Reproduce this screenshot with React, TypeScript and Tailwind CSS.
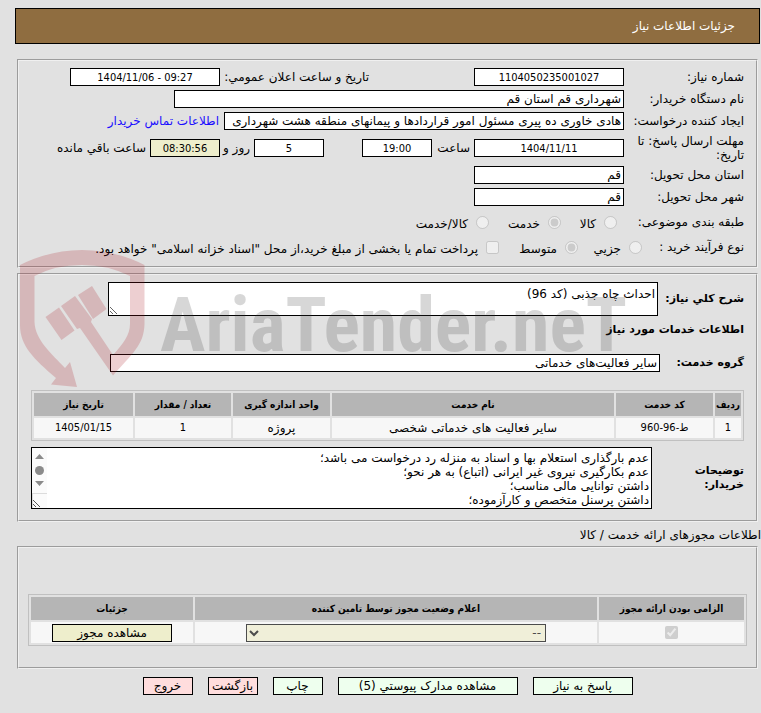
import type { ComponentProps, ReactNode } from "react";

const services = [
  {
    code: "ط-96-960",
    name: "سایر فعالیت های خدماتی شخصی",
    unit: "پروژه",
    amount: "1",
    date: "1405/01/15",
  },
];

const notes = [
  "عدم بارگذاری استعلام بها و اسناد به منزله رد درخواست می باشد؛",
  "عدم بکارگیری نیروی غیر ایرانی (اتباع) به هر نحو؛",
  "داشتن توانایی مالی مناسب؛",
  "داشتن پرسنل متخصص و کارآزموده؛",
].join("\n");

const actions = [
  { label: "پاسخ به نیاز", style: "w-[100px] bg-[#eeffee]" },
  { label: "مشاهده مدارک پیوستي (5)", style: "w-[180px] bg-[#eeffee]" },
  { label: "چاپ", style: "w-[50px] bg-[#eeffee]" },
  { label: "بازگشت", style: "w-[50px] bg-[#ffdddd]" },
  { label: "خروج", style: "w-[50px] bg-[#ffdddd]" },
];

const Panel = ({ className = "", children }: { className?: string; children: ReactNode }) => (
  <fieldset className={`mx-0.5 min-w-0 border-2 border-[#f0f0f0] [border-style:groove] ${className}`}>
    {children}
  </fieldset>
);

const Field = ({ className = "", ...props }: ComponentProps<"input">) => (
  <input
    readOnly
    className={`h-[18px] min-w-0 border border-black px-0.5 outline-none ${className}`}
    {...props}
  />
);

// numbers, dates and times
const numeric = "font-['DejaVu_Sans_Condensed','DejaVu_Sans',sans-serif] text-[11px]";

const NumberField = ({ className = "", ...props }: ComponentProps<"input">) => (
  <Field dir="ltr" className={`text-center ${numeric} ${className}`} {...props} />
);

const Row = ({ className = "", children }: { className?: string; children: ReactNode }) => (
  <div className={`flex items-center ${className}`}>{children}</div>
);

const Label = ({ className = "w-[120px]", ...props }: ComponentProps<"label">) => (
  <label className={`shrink-0 ${className}`} {...props} />
);

const Choice = ({ text, className = "", ...props }: ComponentProps<"input"> & { text: string }) => (
  <label className={`flex shrink-0 items-center gap-2 ${className}`}>
    <input disabled className="size-[13px] shrink-0" {...props} />
    <span className="pt-1 whitespace-nowrap">{text}</span>
  </label>
);

const Watermark = () => (
  <div
    dir="ltr"
    aria-hidden="true"
    className="pointer-events-none absolute top-[250px] left-5 flex opacity-20"
  >
    <svg width="126" height="138" viewBox="0 0 126 138" fill="#aa141e">
      <path d="M0 15Q30 0 62 0Q95 0 124.500 15V74C124 95 112 104 93 125.500L60 78 57 79 41 56 55 46 72 69 71 72 93 105C103 94 110 85 110 74V26Q88 15 62 15Q35 15 14.500 26V72C15 90 32 104 45 118L50 112 57 137 31 134.500 36 128C14 109 0 96 0 75Z" />
      <path d="M25.500 67 39 57.500 54.500 80.500 41.500 90ZM58 45 72 36 86.500 59 73 69Z" />
    </svg>
    <span className="mt-[30px] ml-3.5 font-['Roboto_Condensed','Roboto',sans-serif] text-[76px] leading-[90px] font-bold whitespace-nowrap text-[#3c3c3c]">
      AriaTender.neT
    </span>
  </div>
);

const heading = "text-[11px] font-bold";
const th = "h-[23px] bg-[#b5b5b5] p-0 font-['DejaVu_Sans_Condensed','DejaVu_Sans',sans-serif] text-[10px] font-bold";
const td = "bg-[#f7f7f7] p-0";
const table = "w-full table-fixed border-separate border-spacing-[2px] border border-[#c0c0c0] text-center";

const App = () => {
  return (
    <div
      dir="rtl"
      className="relative min-h-screen bg-[#e1e1e1] pt-2 pr-px pb-4 pl-[15px] font-['DejaVu_Sans',sans-serif] text-[12px] leading-[14px] text-black"
    >
      <header className="flex h-9 items-center border border-black bg-[#8f6d40] px-6 text-white">
        <h1>جزئیات اطلاعات نیاز</h1>
      </header>

      <Panel className="mt-[15px] px-3 pt-[7px] pb-2.5">
        <div className="flex flex-col gap-1">
          <Row>
            <Label htmlFor="number">شماره نیاز:</Label>
            <NumberField id="number" className="w-[150px] bg-white" value="1104050235001027" />
            <Label htmlFor="announced" className="ms-[105px] w-[149px]">
              تاریخ و ساعت اعلان عمومي:
            </Label>
            <NumberField id="announced" className="w-[150px] bg-white" value="1404/11/06 - 09:27" />
          </Row>
          <Row>
            <Label htmlFor="buyer">نام دستگاه خریدار:</Label>
            <Field id="buyer" className="w-[450px] bg-white" value="شهرداری قم استان قم" />
          </Row>
          <Row>
            <Label htmlFor="creator">ایجاد کننده درخواست:</Label>
            <Field
              id="creator"
              className="w-[400px] bg-white"
              value="هادی خاوری ده پیری مسئول امور قراردادها و پیمانهای منطقه هشت شهرداری"
            />
            <a href="#contact" className="ms-[5px] whitespace-nowrap text-[#1a0dff]">
              اطلاعات تماس خریدار
            </a>
          </Row>
          <Row>
            <Label htmlFor="deadline">مهلت ارسال پاسخ: تا تاریخ:</Label>
            <NumberField id="deadline" className="w-[150px] bg-white" value="1404/11/11" />
            <Label htmlFor="hour" className="w-[42px] ps-1">
              ساعت
            </Label>
            <NumberField id="hour" className="w-[70px] bg-white" value="19:00" />
            <NumberField id="days" className="mr-[38px] w-[70px] bg-white" value="5" />
            <Label htmlFor="days" className="w-[34px] ps-1">
              روز و
            </Label>
            <NumberField id="left" className="w-[70px] bg-[#eeeecc]" value="08:30:56" />
            <Label htmlFor="left" className="ps-1">
              ساعت باقي مانده
            </Label>
          </Row>
          <Row>
            <Label htmlFor="province">استان محل تحویل:</Label>
            <Field id="province" className="w-[150px] bg-white" value="قم" />
          </Row>
          <Row>
            <Label htmlFor="city">شهر محل تحویل:</Label>
            <Field id="city" className="w-[150px] bg-white" value="قم" />
          </Row>
          <Row className="h-6">
            <span className="w-[127px] shrink-0">طبقه بندی موضوعی:</span>
            <Choice type="radio" name="subject" text="کالا" className="w-14" />
            <Choice type="radio" name="subject" text="خدمت" defaultChecked className="w-[72px]" />
            <Choice type="radio" name="subject" text="کالا/خدمت" />
          </Row>
          <Row className="h-[18px]">
            <span className="w-[102px] shrink-0">نوع فرآیند خرید :</span>
            <Choice type="radio" name="process" text="جزیي" className="w-16" />
            <Choice type="radio" name="process" text="متوسط" defaultChecked className="w-[79px]" />
            <Choice
              type="checkbox"
              text='پرداخت تمام یا بخشی از مبلغ خرید،از محل "اسناد خزانه اسلامی" خواهد بود.'
            />
          </Row>
        </div>
      </Panel>

      <Panel className="mt-[5px] px-3 pt-[7px] pb-[11px]">
        <Row>
          <Label htmlFor="summary" className={`w-[86px] ${heading}`}>
            شرح كلي نیاز:
          </Label>
          <textarea
            id="summary"
            readOnly
            className="h-[34px] w-[550px] border border-black bg-white px-0.5 py-1 outline-none"
            value="احداث چاه جذبی (کد 96)"
          />
        </Row>
        <h2 className={`mt-[7px] ${heading}`}>اطلاعات خدمات مورد نیاز</h2>
        <Row className="mt-[17px]">
          <Label htmlFor="group" className={`w-[84px] ${heading}`}>
            گروه خدمت:
          </Label>
          <Field id="group" className="w-[550px] bg-white" value="سایر فعالیت‌های خدماتی" />
        </Row>
        <table className={`mt-[18px] ${table}`}>
          <colgroup>
            <col className="w-[26px]" />
            <col className="w-[97px]" />
            <col />
            <col className="w-[97px]" />
            <col className="w-[96px]" />
            <col className="w-[99px]" />
          </colgroup>
          <thead>
            <tr>
              <th className={th}>ردیف</th>
              <th className={th}>کد خدمت</th>
              <th className={th}>نام خدمت</th>
              <th className={th}>واحد اندازه گیری</th>
              <th className={th}>تعداد / مقدار</th>
              <th className={th}>تاریخ نیاز</th>
            </tr>
          </thead>
          <tbody>
            {services.map((service, i) => (
              <tr key={service.code} className="h-5">
                <td className={`${td} ${numeric}`}>{i + 1}</td>
                <td className={`${td} ${numeric}`}>{service.code}</td>
                <td className={td}>{service.name}</td>
                <td className={td}>{service.unit}</td>
                <td className={`${td} ${numeric}`}>{service.amount}</td>
                <td className={`${td} ${numeric}`}>{service.date}</td>
              </tr>
            ))}
          </tbody>
        </table>
        <Row className="mt-1.5">
          <Label htmlFor="notes" className={`w-[92px] pl-7 ${heading}`}>
            توضیحات خریدار:
          </Label>
          <div className="relative h-[62px] min-w-0 flex-1">
            <textarea
              id="notes"
              readOnly
              className="size-full resize-none overflow-hidden border border-black bg-white px-0.5 py-[3px] outline-none"
              value={notes}
            />
            <svg className="absolute top-px left-px" width="15" height="60" viewBox="0 0 15 60">
              <path d="M0 0h15v60H0z" fill="#fbfbfb" />
              <path d="M3 11h9L7.500 6zM3 33h9L7.500 38z" fill="#8b8b8b" />
              <circle cx="7.500" cy="22.500" r="4.500" fill="#8b8b8b" />
              <path d="M0 45.500h15M.5 45v15" stroke="#dcdcdc" />
              <path d="M1 52l7 7M1 56l3 3" stroke="#555" />
            </svg>
          </div>
        </Row>
      </Panel>

      <h2 className="mt-1.5 -mr-px">اطلاعات مجوزهای ارائه خدمت / کالا</h2>

      <Panel className="mt-1 px-[9px] pt-[46px] pb-[21px]">
        <table className={table}>
          <colgroup>
            <col className="w-[145px]" />
            <col />
            <col className="w-[162px]" />
          </colgroup>
          <thead>
            <tr>
              <th className={th}>الزامی بودن ارائه مجوز</th>
              <th className={th}>اعلام وضعیت مجوز توسط تامین کننده</th>
              <th className={th}>جزئیات</th>
            </tr>
          </thead>
          <tbody>
            <tr className="h-[21px]">
              <td className={td}>
                <input
                  type="checkbox"
                  disabled
                  defaultChecked
                  aria-label="الزامی بودن ارائه مجوز"
                  className="mx-auto block size-[13px]"
                />
              </td>
              <td className={td}>
                <div className="relative mx-auto w-[300px]">
                  <select
                    disabled
                    aria-label="اعلام وضعیت مجوز"
                    className="block h-[18px] w-full appearance-none border border-[#4c4c4c] bg-[#f0efd9] px-1 text-[#4c4c4c]"
                  >
                    <option>--</option>
                  </select>
                  <svg className="absolute top-[6px] left-[3px]" width="10" height="7" viewBox="0 0 10 7">
                    <path d="M1 1l4 4 4-4" fill="none" stroke="#4c4c4c" strokeWidth="2" />
                  </svg>
                </div>
              </td>
              <td className={td}>
                <button className="mx-auto block h-[18px] w-[120px] border border-black bg-[#eeeecc]">
                  مشاهده مجوز
                </button>
              </td>
            </tr>
          </tbody>
        </table>
      </Panel>

      <div className="mt-2 flex justify-center gap-[15px]">
        {actions.map((action) => (
          <button
            key={action.label}
            className={`h-[18px] border border-black whitespace-nowrap ${action.style}`}
          >
            {action.label}
          </button>
        ))}
      </div>

      <Watermark />
    </div>
  );
};

export default App;
